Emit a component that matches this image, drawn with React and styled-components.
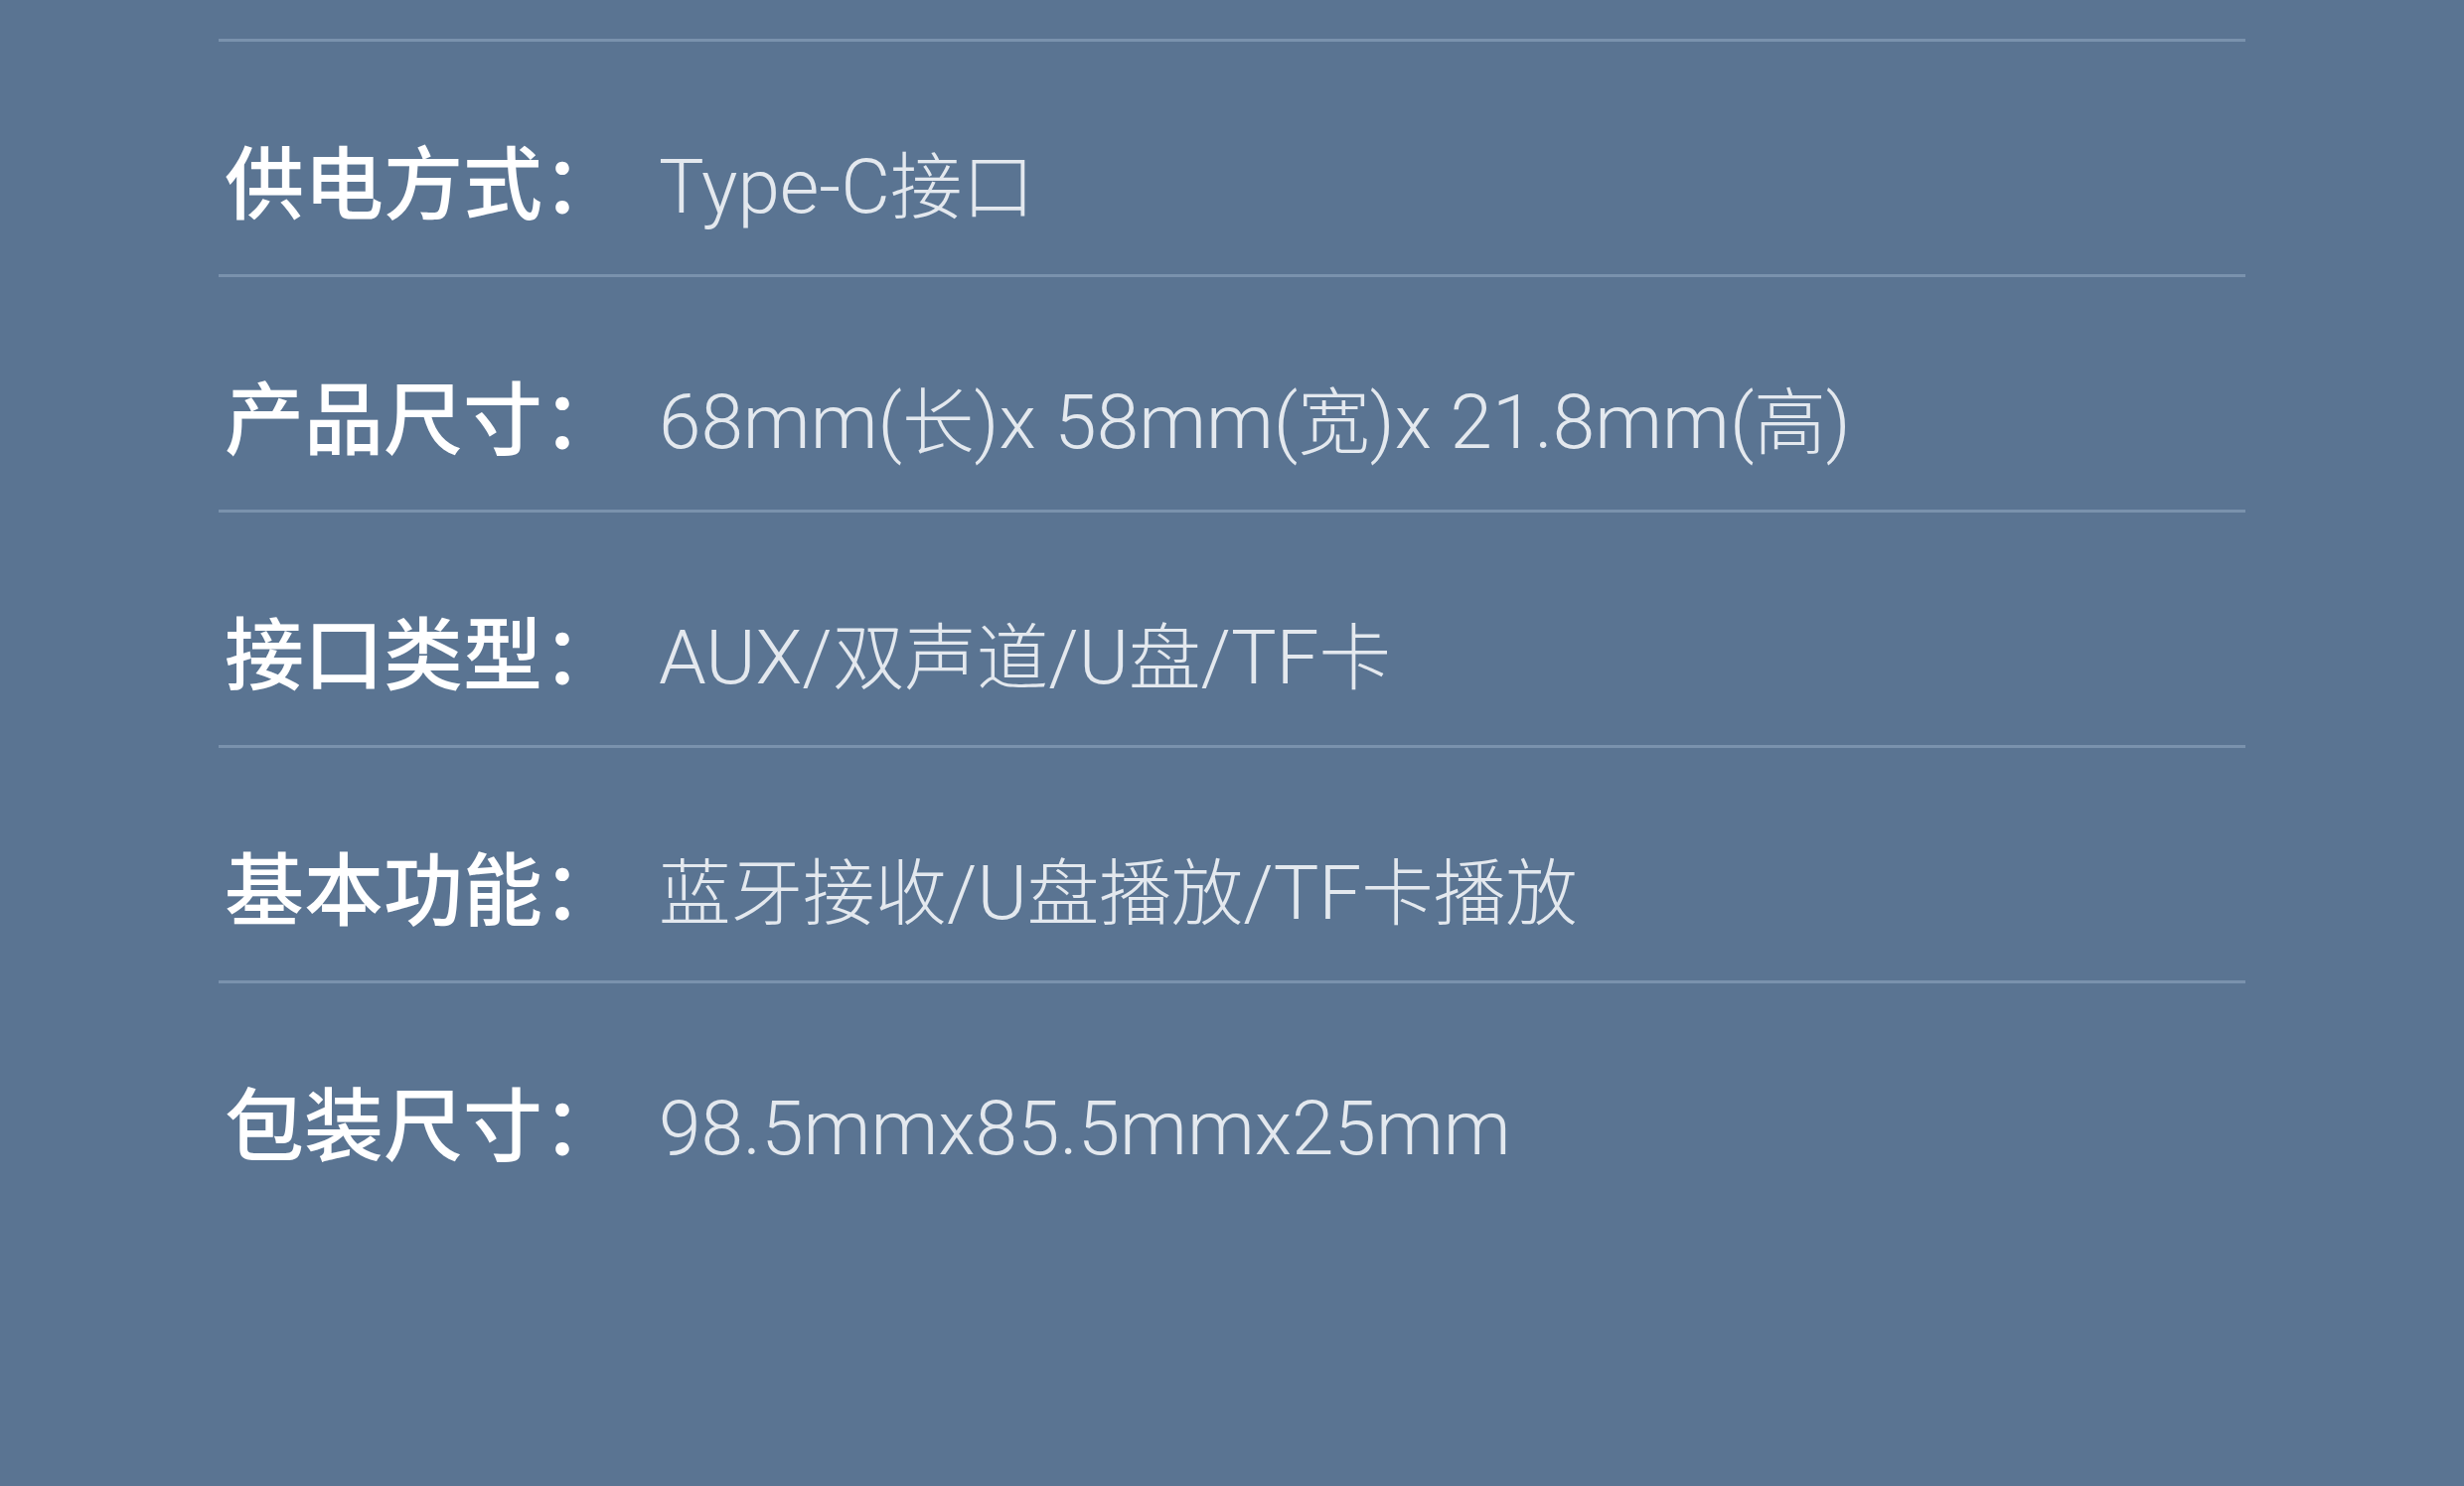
import React from "react";
import styled, { createGlobalStyle } from "styled-components";

const GlobalStyle = createGlobalStyle`
  html, body {
    margin: 0;
    padding: 0;
    background: #5a7492;
  }
  body {
    font-family: "Noto Sans CJK SC", "Noto Sans", sans-serif;
  }
`;

const Page = styled.div`
  width: 2480px;
  height: 1496px;
  background: #5a7492;
  box-sizing: border-box;
  padding: 39px 0 0 220px;
`;

const SpecList = styled.div`
  width: 2040px;
  display: flex;
  flex-direction: column;
`;

const Row = styled.div`
  display: flex;
  align-items: baseline;
  height: 237px;
  box-sizing: border-box;
  padding: 97px 0 0 6px;
  border-top: ${(p) => (p.$lined ? "3px solid #7a92ad" : "none")};
`;

const Label = styled.div`
  width: 437px;
  flex-shrink: 0;
  font-size: 80px;
  font-weight: 500;
  color: #ffffff;
  line-height: 1;
  white-space: nowrap;
`;

const Value = styled.div`
  font-family: Roboto, "Noto Sans CJK SC", sans-serif;
  font-size: 76.5px;
  font-weight: 300;
  color: #e3e8ee;
  line-height: 1;
  white-space: nowrap;
`;

const Han = styled.span`
  font-family: "Noto Sans CJK SC", sans-serif;
  font-size: 72.5px;
  font-weight: 300;
`;

const specs = [
  { label: "供电方式：", value: "Type-C接口" },
  { label: "产品尺寸：", value: "68mm(长)x 58mm(宽)x 21.8mm(高)" },
  { label: "接口类型：", value: "AUX/双声道/U盘/TF卡" },
  { label: "基本功能：", value: "蓝牙接收/U盘播放/TF卡播放" },
  { label: "包装尺寸：", value: "98.5mmx85.5mmx25mm" },
];

function Mixed({ text }) {
  const parts = text.split(/([\u4e00-\u9fff]+)/).filter(Boolean);
  return parts.map((p, i) =>
    /[\u4e00-\u9fff]/.test(p) ? <Han key={i}>{p}</Han> : <span key={i}>{p}</span>
  );
}

export default function App() {
  return (
    <>
      <GlobalStyle />
      <Page>
        <SpecList>
          {specs.map((s) => (
            <Row key={s.label} $lined>
              <Label>{s.label}</Label>
              <Value>
                <Mixed text={s.value} />
              </Value>
            </Row>
          ))}
        </SpecList>
      </Page>
    </>
  );
}
